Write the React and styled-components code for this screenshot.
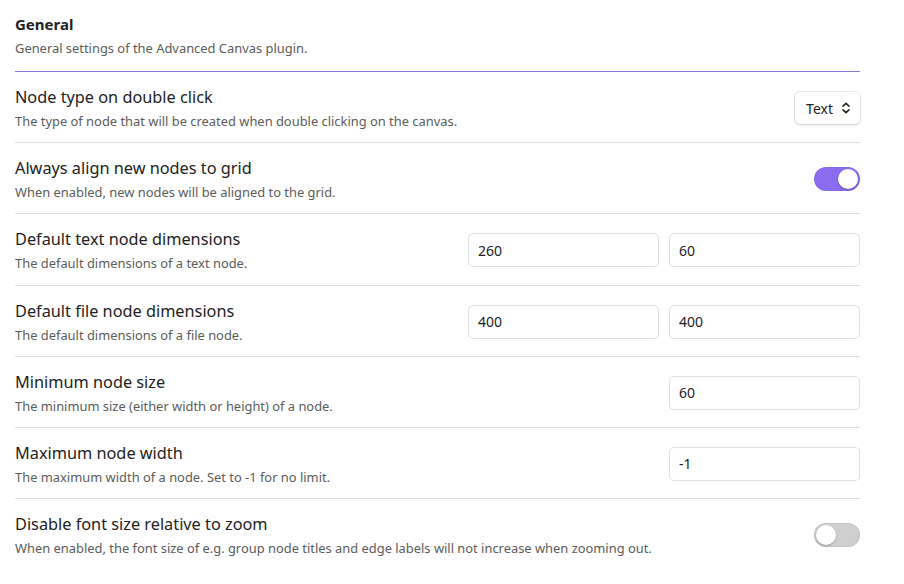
import React from 'react';
import styled, { createGlobalStyle } from 'styled-components';

const GlobalStyle = createGlobalStyle`
  body {
    margin: 0;
    background: #ffffff;
    font-family: "Noto Sans", "Open Sans", sans-serif;
    color: #222222;
  }
`;

const Page = styled.div`
  width: 845px;
  padding-left: 15px;
`;

const Heading = styled.div`
  padding: 12px 0 13px;
  border-bottom: 1px solid #8a78e0;
`;

const HeadingTitle = styled.div`
  font-size: 15px;
  font-weight: 700;
  line-height: 24px;
`;

const Row = styled.div`
  display: flex;
  align-items: center;
  justify-content: space-between;
  gap: 16px;
  padding: 13px 0 11.2px;
  border-top: ${(p) => (p.$first ? 'none' : '1px solid #e0e0e0')};
`;

const Info = styled.div`
  flex: 1;
  min-width: 0;
`;

const Name = styled.div`
  font-size: 16.3px;
  line-height: 24px;
  color: #222222;
`;

const Desc = styled.div`
  padding-top: 3px;
  font-size: 12.9px;
  line-height: 19px;
  color: #5c5c5c;
`;

const Controls = styled.div`
  display: flex;
  gap: 10px;
  flex-shrink: 0;
`;

const TextInput = styled.input`
  box-sizing: border-box;
  width: 191px;
  height: 34px;
  padding: 0 9px;
  border: 1px solid #e0e0e0;
  border-radius: 5px;
  background: #ffffff;
  font-family: inherit;
  font-size: 14px;
  color: #222222;
  outline: none;
`;

const Dropdown = styled.div`
  box-sizing: border-box;
  display: flex;
  align-items: center;
  gap: 8px;
  height: 32px;
  padding: 0 9px 0 11px;
  border-radius: 5px;
  background: #ffffff;
  box-shadow: 0 0 0 1px rgba(0, 0, 0, 0.07), 0 1px 3px rgba(0, 0, 0, 0.12);
  font-size: 14px;
  color: #222222;
`;

const Toggle = styled.div`
  position: relative;
  width: 46px;
  height: 24px;
  border-radius: 12px;
  background: ${(p) => (p.$on ? '#8b6cef' : '#cfcfcf')};
  box-shadow: inset 0 0 0 1px ${(p) => (p.$on ? 'rgba(0,0,0,0.03)' : 'rgba(0,0,0,0.06)')};
`;

const Knob = styled.div`
  position: absolute;
  top: 2px;
  left: ${(p) => (p.$on ? '24px' : '2px')};
  width: 20px;
  height: 20px;
  border-radius: 50%;
  background: #ffffff;
  box-shadow: 0 1px 2px rgba(0, 0, 0, 0.25);
`;

const UpDown = () => (
  <svg width="10" height="12" viewBox="0 0 10 12" fill="none" stroke="#222" strokeWidth="1.6" strokeLinecap="round" strokeLinejoin="round">
    <path d="M2 4.2 L5 1.4 L8 4.2" />
    <path d="M2 7.8 L5 10.6 L8 7.8" />
  </svg>
);

const settings = [
  { name: 'Node type on double click', desc: 'The type of node that will be created when double clicking on the canvas.', control: 'dropdown' },
  { name: 'Always align new nodes to grid', desc: 'When enabled, new nodes will be aligned to the grid.', control: 'toggle', on: true },
  { name: 'Default text node dimensions', desc: 'The default dimensions of a text node.', inputs: ['260', '60'] },
  { name: 'Default file node dimensions', desc: 'The default dimensions of a file node.', inputs: ['400', '400'] },
  { name: 'Minimum node size', desc: 'The minimum size (either width or height) of a node.', inputs: ['60'] },
  { name: 'Maximum node width', desc: 'The maximum width of a node. Set to -1 for no limit.', inputs: ['-1'] },
  { name: 'Disable font size relative to zoom', desc: 'When enabled, the font size of e.g. group node titles and edge labels will not increase when zooming out.', control: 'toggle', on: false },
];

const Control = ({ item }) => {
  if (item.control === 'dropdown') {
    return (
      <Dropdown>
        Text
        <UpDown />
      </Dropdown>
    );
  }
  if (item.control === 'toggle') {
    return (
      <Toggle $on={item.on}>
        <Knob $on={item.on} />
      </Toggle>
    );
  }
  return (
    <Controls>
      {item.inputs.map((v, i) => (
        <TextInput key={i} defaultValue={v} />
      ))}
    </Controls>
  );
};

export default function App() {
  return (
    <Page>
      <GlobalStyle />
      <Heading>
        <HeadingTitle>General</HeadingTitle>
        <Desc>General settings of the Advanced Canvas plugin.</Desc>
      </Heading>
      {settings.map((item, i) => (
        <Row key={item.name} $first={i === 0}>
          <Info>
            <Name>{item.name}</Name>
            <Desc>{item.desc}</Desc>
          </Info>
          <Control item={item} />
        </Row>
      ))}
    </Page>
  );
}
